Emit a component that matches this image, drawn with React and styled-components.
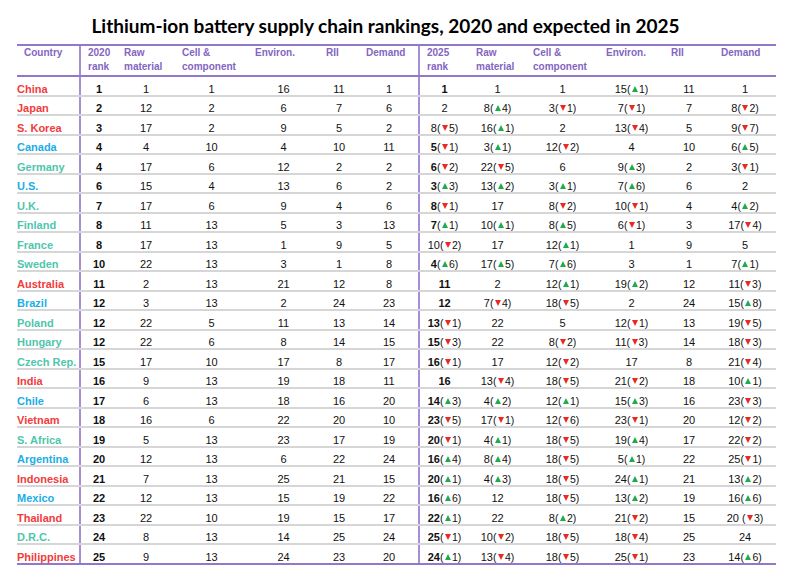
import React from 'react'
import styled, { createGlobalStyle } from 'styled-components'

const GlobalStyle = createGlobalStyle`
  body {
    margin: 0;
    background: #fff;
    font-family: "Liberation Sans", Arial, sans-serif;
  }
`

const COLS = '63px 37px 58px 73px 71px 40px 60px 50px 57px 73px 65px 50px 62px'

const REGION = {
  r: '#f23b3b',
  b: '#1aaee6',
  t: '#4ec6ad',
}

// right side: '^' = up (green), 'v' = down (red), '~' prefix = rank not bold
const rows = [
  ['China', 'r', [1, 1, 1, 16, 11, 1], ['1', '1', '1', '15^1', '11', '1']],
  ['Japan', 'r', [2, 12, 2, 6, 7, 6], ['~2', '8^4', '3v1', '7v1', '7', '8v2']],
  ['S. Korea', 'r', [3, 17, 2, 9, 5, 2], ['~8v5', '16^1', '2', '13v4', '5', '9v7']],
  ['Canada', 'b', [4, 4, 10, 4, 10, 11], ['5v1', '3^1', '12v2', '4', '10', '6^5']],
  ['Germany', 't', [4, 17, 6, 12, 2, 2], ['6v2', '22v5', '6', '9^3', '2', '3v1']],
  ['U.S.', 'b', [6, 15, 4, 13, 6, 2], ['3^3', '13^2', '3^1', '7^6', '6', '2']],
  ['U.K.', 't', [7, 17, 6, 9, 4, 6], ['8v1', '17', '8v2', '10v1', '4', '4^2']],
  ['Finland', 't', [8, 11, 13, 5, 3, 13], ['7^1', '10^1', '8^5', '6v1', '3', '17v4']],
  ['France', 't', [8, 17, 13, 1, 9, 5], ['~10v2', '17', '12^1', '1', '9', '5']],
  ['Sweden', 't', [10, 22, 13, 3, 1, 8], ['4^6', '17^5', '7^6', '3', '1', '7^1']],
  ['Australia', 'r', [11, 2, 13, 21, 12, 8], ['11', '2', '12^1', '19^2', '12', '11v3']],
  ['Brazil', 'b', [12, 3, 13, 2, 24, 23], ['12', '7v4', '18v5', '2', '24', '15^8']],
  ['Poland', 't', [12, 22, 5, 11, 13, 14], ['13v1', '22', '5', '12v1', '13', '19v5']],
  ['Hungary', 't', [12, 22, 6, 8, 14, 15], ['15v3', '22', '8v2', '11v3', '14', '18v3']],
  ['Czech Rep.', 't', [15, 17, 10, 17, 8, 17], ['16v1', '17', '12v2', '17', '8', '21v4']],
  ['India', 'r', [16, 9, 13, 19, 18, 11], ['16', '13v4', '18v5', '21v2', '18', '10^1']],
  ['Chile', 'b', [17, 6, 13, 18, 16, 20], ['14^3', '4^2', '12^1', '15^3', '16', '23v3']],
  ['Vietnam', 'r', [18, 16, 6, 22, 20, 10], ['23v5', '17v1', '12v6', '23v1', '20', '12v2']],
  ['S. Africa', 't', [19, 5, 13, 23, 17, 19], ['20v1', '4^1', '18v5', '19^4', '17', '22v2']],
  ['Argentina', 'b', [20, 12, 13, 6, 22, 24], ['16^4', '8^4', '18v5', '5^1', '22', '25v1']],
  ['Indonesia', 'r', [21, 7, 13, 25, 21, 15], ['20^1', '4^3', '18v5', '24^1', '21', '13^2']],
  ['Mexico', 'b', [22, 12, 13, 15, 19, 22], ['16^6', '12', '18v5', '13^2', '19', '16^6']],
  ['Thailand', 'r', [23, 22, 10, 19, 15, 17], ['22^1', '22', '8^2', '21v2', '15', '20 v3']],
  ['D.R.C.', 't', [24, 8, 13, 14, 25, 24], ['25v1', '10v2', '18v5', '18v4', '25', '24']],
  ['Philippines', 'r', [25, 9, 13, 24, 23, 20], ['24^1', '13v4', '18v5', '25v1', '23', '14^6']],
]

const headLeft = ['2020\nrank', 'Raw\nmaterial', 'Cell &\ncomponent', 'Environ.', 'RII', 'Demand']
const headRight = ['2025\nrank', 'Raw\nmaterial', 'Cell &\ncomponent', 'Environ.', 'RII', 'Demand']

const Page = styled.div`
  width: 791px;
  height: 579px;
  padding: 15px 0 0 17px;
  box-sizing: border-box;
`

const Title = styled.h1`
  width: 759px;
  margin: 0 0 7px;
  padding-right: 22px;
  box-sizing: border-box;
  text-align: center;
  font-family: Lato, "Open Sans", sans-serif;
  font-weight: 700;
  font-size: 19px;
  line-height: 22px;
  color: #000;
`

const Table = styled.div`
  width: 759px;
  display: flex;
  flex-direction: column;
`

const HeaderRow = styled.div`
  display: grid;
  grid-template-columns: ${COLS};
  height: 33px;
  box-sizing: border-box;
  border-top: 2px solid #9277ca;
  border-bottom: 2px solid #9277ca;
`

const HeadCell = styled.div`
  padding-left: 7px;
  font-size: 10px;
  font-weight: 700;
  line-height: 14px;
  color: #8465c2;
  white-space: pre-line;
  border-left: ${(p) => (p.$divider ? '2px solid #a68ed8' : 'none')};
  margin-left: ${(p) => (p.$divider ? '-1px' : '0')};
`

const Row = styled.div`
  display: grid;
  grid-template-columns: ${COLS};
  height: 19.5px;
  box-sizing: border-box;
  border-bottom: 2px solid ${(p) => (p.$last ? '#9277ca' : '#d6d6d6')};
`

const Cell = styled.div`
  display: flex;
  align-items: flex-end;
  justify-content: center;
  font-size: 11px;
  line-height: 12px;
  color: #111;
  font-weight: ${(p) => (p.$bold ? 700 : 400)};
  white-space: pre;
  border-left: ${(p) => (p.$divider ? '2px solid #a68ed8' : 'none')};
  margin-left: ${(p) => (p.$divider ? '-1px' : '0')};
`

const Country = styled.div`
  display: flex;
  align-items: flex-end;
  font-size: 11px;
  line-height: 12px;
  font-weight: 700;
  color: ${(p) => p.$color};
  white-space: nowrap;
`

const Delta = styled.span`
  font-weight: 400;
  font-size: 10.5px;
`

const Tri = styled.span`
  display: inline-block;
  width: 0;
  height: 0;
  margin: 0 1px 1px 1.5px;
  border-left: 3px solid transparent;
  border-right: 3px solid transparent;
  ${(p) =>
    p.$up
      ? 'border-bottom: 6px solid #1faa4b;'
      : 'border-top: 6px solid #ea2a22;'}
`

function Value({ text }) {
  const m = text.match(/^(\d+)( ?)([\^v])(\d+)$/)
  if (!m) return text
  return (
    <>
      {m[1]}
      <Delta>
        {m[2]}(<Tri $up={m[3] === '^'} />
        {m[4]})
      </Delta>
    </>
  )
}

export default function App() {
  return (
    <Page>
      <GlobalStyle />
      <Title>Lithium-ion battery supply chain rankings, 2020 and expected in 2025</Title>
      <Table>
        <HeaderRow>
          <HeadCell>Country</HeadCell>
          {headLeft.map((h, i) => (
            <HeadCell key={'l' + i} $divider={i === 0}>{h}</HeadCell>
          ))}
          {headRight.map((h, i) => (
            <HeadCell key={'r' + i} $divider={i === 0}>{h}</HeadCell>
          ))}
        </HeaderRow>
        {rows.map(([name, region, left, right], r) => (
          <Row key={name} $last={r === rows.length - 1}>
            <Country $color={REGION[region]}>{name}</Country>
            {left.map((v, i) => (
              <Cell key={'l' + i} $bold={i === 0} $divider={i === 0}>{v}</Cell>
            ))}
            {right.map((v, i) => {
              const plain = v.startsWith('~')
              const text = plain ? v.slice(1) : v
              return (
                <Cell key={'r' + i} $bold={i === 0 && !plain} $divider={i === 0}>
                  <Value text={text} />
                </Cell>
              )
            })}
          </Row>
        ))}
      </Table>
    </Page>
  )
}
